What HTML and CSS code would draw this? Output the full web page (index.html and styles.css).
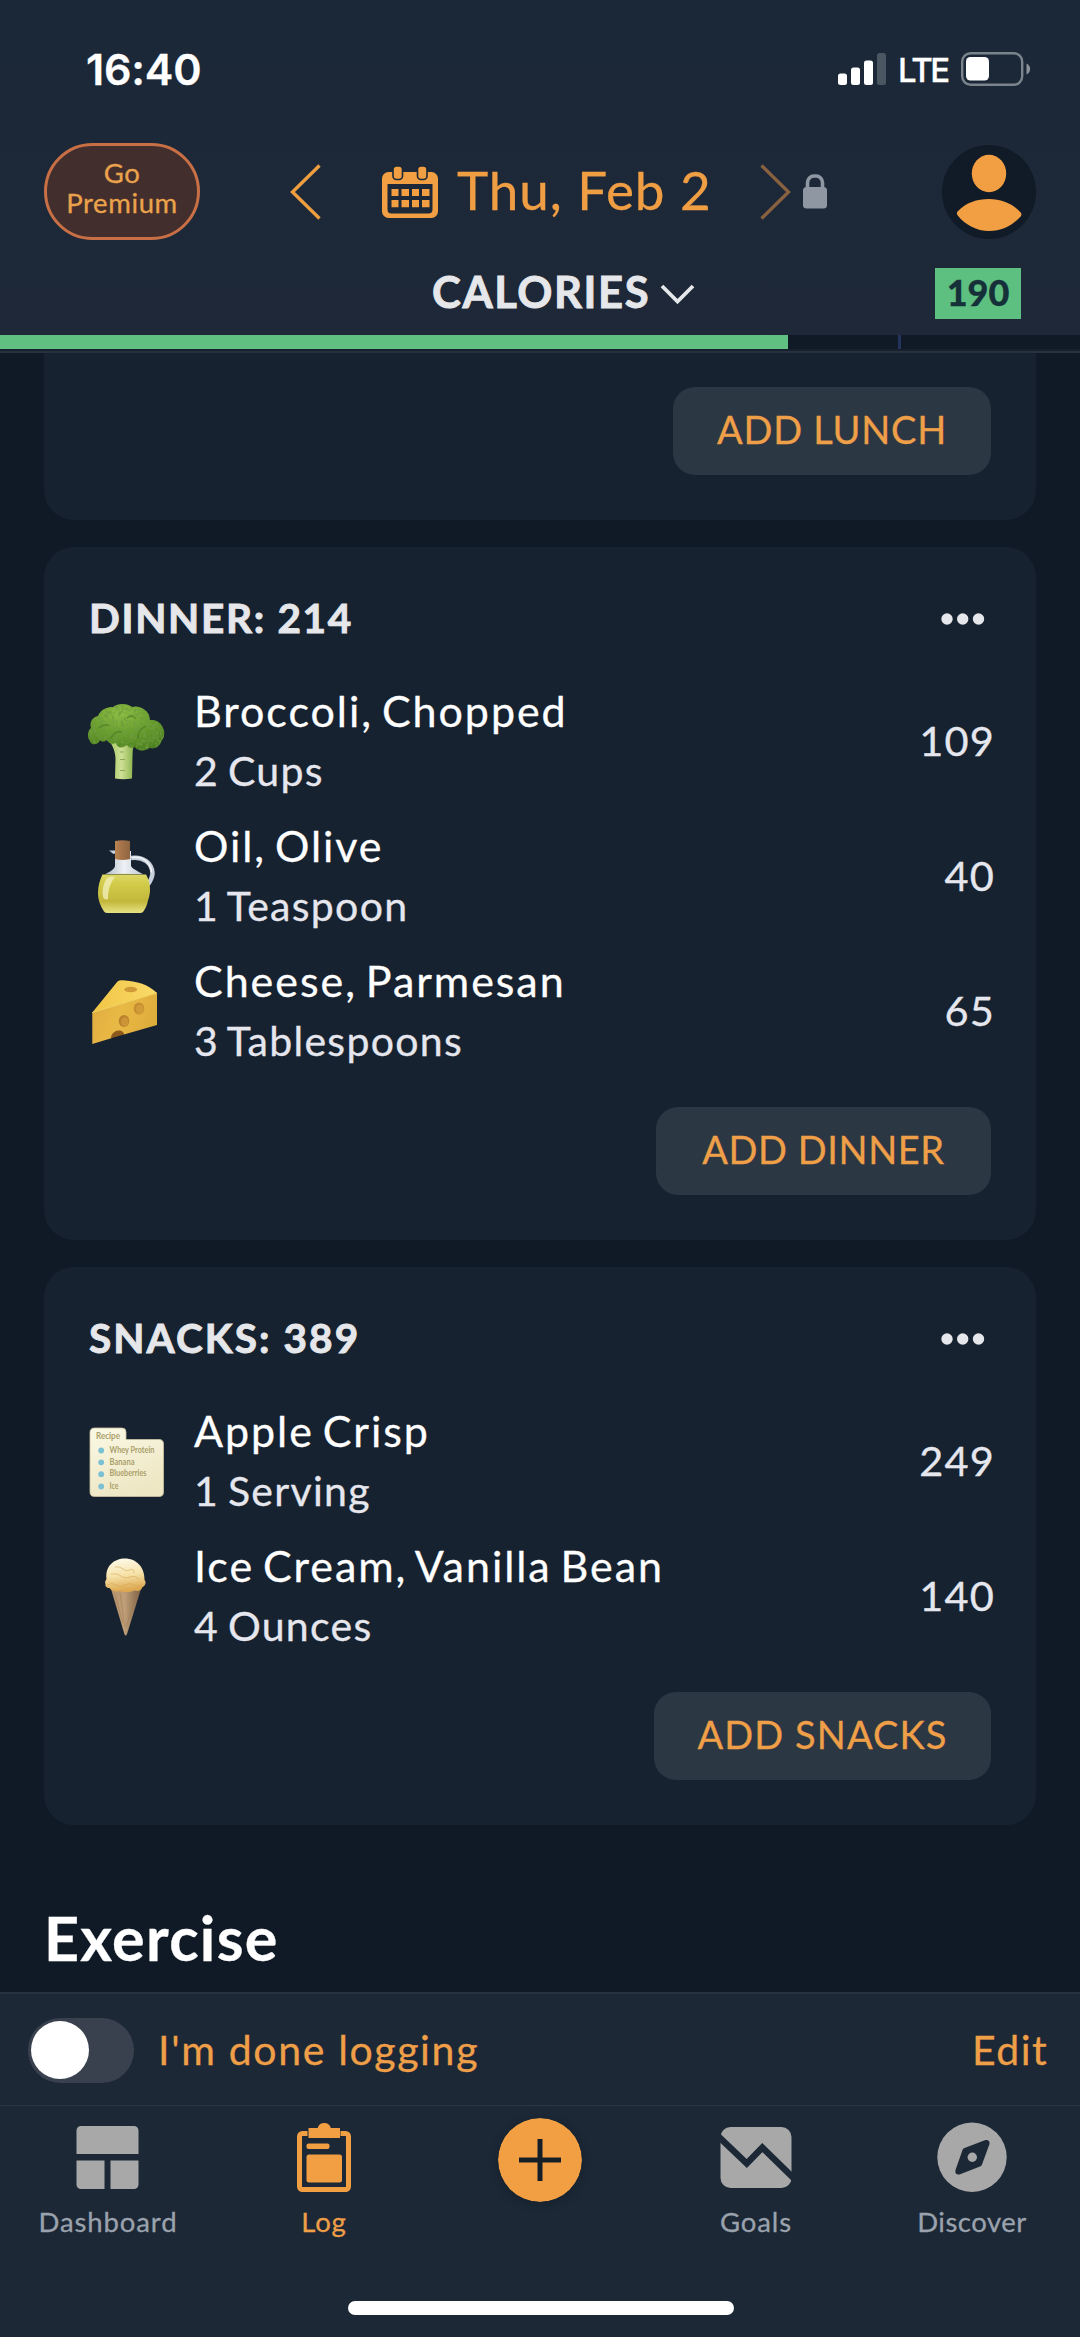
FILE: index.html
```html
<!DOCTYPE html>
<html lang="en">
<head>
<meta charset="utf-8">
<title>Log – Thu, Feb 2</title>
<link rel="stylesheet" href="styles.css">
</head>
<body>
<header class="top">
  <div class="status">
    <span class="time">16:40</span>
    <svg class="signal" width="49" height="32" viewBox="0 0 49 32"><g fill="#fff"><rect x="0" y="20.500" width="9" height="11.500" rx="2.500"/><rect x="13" y="14.500" width="9" height="17.500" rx="2.500"/><rect x="26" y="7.500" width="9" height="24.500" rx="2.500"/></g><rect x="39" y="0" width="9" height="32" rx="2.500" fill="#4a5662"/></svg>
    <span class="lte">LTE</span>
    <svg class="battery" width="71" height="34" viewBox="0 0 71 34"><rect x="1.200" y="1.200" width="60" height="31.600" rx="8.500" fill="none" stroke="#7b848d" stroke-width="2.400"/><rect x="5" y="5" width="23" height="23.500" rx="4.500" fill="#fff"/><path d="M65.500 11.500a6 6 0 0 1 0 11z" fill="#8b939b"/></svg>
  </div>
  <nav class="datebar">
    <button class="premium">Go<br>Premium</button>
    <svg class="prev" width="31" height="56" viewBox="0 0 31 56"><path d="M29.500 1.500 2.500 28l27 26.500" fill="none" stroke="#ee9d40" stroke-width="3.400"/></svg>
    <svg class="calendar" width="56" height="54" viewBox="0 0 56 54"><path fill="#f29e42" fill-rule="evenodd" d="M6.500 7h43a6.500 6.500 0 0 1 6.500 6.500v33a6.500 6.500 0 0 1-6.500 6.500h-43A6.500 6.500 0 0 1 0 46.500v-33A6.500 6.500 0 0 1 6.500 7zM5.500 19v25.500a4 4 0 0 0 4 4h37a4 4 0 0 0 4-4V19z"/><g fill="#f29e42" stroke="#1c2836" stroke-width="1.600"><rect x="11" y="1" width="9.500" height="13.500" rx="3.500"/><rect x="35.500" y="1" width="9.500" height="13.500" rx="3.500"/></g><g fill="#f29e42"><path d="M9.500 24h7v7h-7zM19.500 24h7.500v7h-7.500zM30 24h7v7h-7zM40 24h7.500v7H40zM9.500 35h7v7.200h-7zM19.500 35h7.500v7.200h-7.500zM30 35h7v7.200h-7zM40 35h7.500v7.200H40z"/></g></svg>
    <span class="date">Thu, Feb 2</span>
    <svg class="next" width="31" height="56" viewBox="0 0 31 56"><path d="M1.500 1.500 28.500 28l-27 26.500" fill="none" stroke="#876140" stroke-width="3.400"/></svg>
    <svg class="lock" width="24" height="35" viewBox="0 0 24 35"><rect y="13" width="24" height="21.500" rx="3.500" fill="#8f97a2"/><path d="M4.500 15V8.500a6.500 6.500 0 0 1 6.500-6.500h2a6.500 6.500 0 0 1 6.500 6.500V15" fill="none" stroke="#8f97a2" stroke-width="3.600"/></svg>
    <svg class="avatar" width="94" height="94" viewBox="0 0 94 94"><circle cx="47" cy="47" r="47" fill="#111a27"/><ellipse cx="47" cy="28.500" rx="17.200" ry="18.700" fill="#f29e42"/><path d="M15.500 66.500C24 57.500 35 54 47 54s24 4.500 31.700 13.500c1 1.500 1 2.500 0 4C70.500 80.500 59.500 86 47 86s-23.500-6-31.300-15.500c-1-1.500-1.200-2.500-.2-4z" fill="#f29e42"/></svg>
  </nav>
  <div class="metric">
    <span class="metric-name">CALORIES</span>
    <svg class="down" width="35" height="20" viewBox="0 0 35 20"><path d="M2 2l15.500 15.500L33 2" fill="none" stroke="#e6e7ea" stroke-width="3.800"/></svg>
    <span class="badge">190</span>
  </div>
  <div class="progress"><i class="fill"></i><i class="tick"></i></div>
</header>

<main class="log">
  <section class="card clipped">
    <button class="add lunch">ADD LUNCH</button>
  </section>

  <section class="card">
    <div class="meal"><h2 class="dinner-title">DINNER: 214</h2><svg class="more" width="44" height="12" viewBox="0 0 44 12"><g fill="#e6e7ea"><circle cx="6" cy="6" r="5.700"/><circle cx="21.700" cy="6" r="5.700"/><circle cx="37.500" cy="6" r="5.700"/></g></svg></div>
    <div class="food">
      <svg class="pic" width="80" height="80" viewBox="0 0 80 80">
        <defs>
          <linearGradient id="stem"><stop offset="0" stop-color="#9cc35a"/><stop offset=".5" stop-color="#cfe095"/><stop offset="1" stop-color="#86b048"/></linearGradient>
          <radialGradient id="crown" cx=".42" cy=".2" r=".85"><stop offset="0" stop-color="#8fbf45"/><stop offset=".5" stop-color="#6a9f2f"/><stop offset="1" stop-color="#4b7f20"/></radialGradient>
          <filter id="florets" x="0" y="0" width="1" height="1"><feTurbulence type="fractalNoise" baseFrequency=".32" numOctaves="2" seed="4" result="noise"/><feColorMatrix in="noise" type="matrix" values="0 0 0 0 .16  0 0 0 0 .33  0 0 0 0 .05  2.600 0 0 0 -1.050" result="dark"/><feComposite in="dark" in2="SourceGraphic" operator="in" result="specks"/><feMerge><feMergeNode in="SourceGraphic"/><feMergeNode in="specks"/></feMerge></filter>
        </defs>
        <path d="M21 37c5 7 7.500 13 7.500 20l-.5 19.500q8.500 1.500 17 0L45.500 55c0-7 1-12 2-18z" fill="url(#stem)"/>
        <path d="M33 50h4M33 57.500h5M33 68.500h5" stroke="#8fa55a" stroke-width="1"/>
        <path d="M4 41C0 36 0 29 4 26c-2-6 2-11 7-12C14 7 20 5 26 5c5-4 14-4 19 0 7-2 14 2 17 8l1 5c8-1 13 5 14 11 1 4-1 8-3 11-2 6-8 7-12 6-5 4-12 3-14-1-3 2-6 1-8-2-5 4-10 3-11-2-4 2-8 0-9-3-3 2-6 2-7 0-2 5-7 5-9 3z" fill="url(#crown)" filter="url(#florets)"/>
        <path d="M12 26q5-5 10-2m2 12q4-8 11-6m5-14q5-4 9 1m2 20q-1-9 8-13" fill="none" stroke="#35661a" stroke-width="1.600" opacity=".4"/>
      </svg>
      <div class="label"><p class="name">Broccoli, Chopped</p><p class="amount">2 Cups</p></div>
      <span class="kcal">109</span>
    </div>
    <div class="food">
      <svg class="pic" width="80" height="80" viewBox="0 0 80 80">
        <defs>
          <linearGradient id="cork"><stop offset="0" stop-color="#b98450"/><stop offset=".4" stop-color="#a8744a"/><stop offset="1" stop-color="#8f6540"/></linearGradient>
          <linearGradient id="oil" x1="0" x2="0" y1="0" y2="1"><stop offset="0" stop-color="#ded96c"/><stop offset=".25" stop-color="#d2cc4a"/><stop offset=".7" stop-color="#c2b73a"/><stop offset="1" stop-color="#e7e384"/></linearGradient>
          <linearGradient id="glass"><stop offset="0" stop-color="#aab4c2"/><stop offset=".5" stop-color="#eef1f5"/><stop offset="1" stop-color="#bcc5d0"/></linearGradient>
        </defs>
        <path d="M44 21c12-2 21 5 21.500 15 0 5-2 8-5 12" fill="none" stroke="#c8d0db" stroke-width="4.500"/><path d="M45 20.500c11-1.500 19 5 19.500 15" fill="none" stroke="#f3f5f8" stroke-width="1.500"/>
        <path d="M22 13.500h6V29c-1 5-8 6-12 10h42c-4-4-12-6-14-10V14h-1.500v8h-13v-6.500l-3 1.500z" fill="url(#glass)"/>
        <path d="M28 4q7.500-1.500 15 0v18q-7.500 2-15 0z" fill="url(#cork)"/>
        <path d="M15.500 37.500Q37 36 59 37.500c5 9 5 18 2 26-1 5-3 9-5 11.500q-1 1-3 1H21q-3 0-4-1.500c-4-6-6-12-6-18 0-8 2-14 4.500-19z" fill="url(#oil)"/><path d="M15.500 37.500h43.500" stroke="#79783b" stroke-width=".8"/>
        <path d="M20 41q4-2 8-1c-5 6-7 14-7 22-2 1-4 0-5-2-1-7 0-13 4-19z" fill="#f3f1c0" opacity=".75"/>
      </svg>
      <div class="label"><p class="name">Oil, Olive</p><p class="amount">1 Teaspoon</p></div>
      <span class="kcal">40</span>
    </div>
    <div class="food">
      <svg class="pic" width="80" height="80" viewBox="0 0 80 80">
        <defs>
          <linearGradient id="rind" x1="0" x2="1"><stop offset="0" stop-color="#f0c443"/><stop offset="1" stop-color="#fadb6a"/></linearGradient>
          <linearGradient id="side" x1="0" x2="1" y2=".3"><stop offset="0" stop-color="#dfaa3f"/><stop offset=".5" stop-color="#e9b945"/><stop offset="1" stop-color="#dfad3c"/></linearGradient>
        </defs>
        <path d="M5.300 40.500 30.500 9.500q2-1.500 5-1.200C50 9 62 13 70 21z" fill="url(#rind)"/>
        <path d="M5.300 40.500 70 21v32L37 62.500c-1-2.500-3-3.500-5.500-3-3.500.5-6 3-6.500 6.500L5.300 72z" fill="url(#side)"/>
        <path d="M5.300 40.500 70 21" stroke="#f8d766" stroke-width="1"/>
        <path d="M24 66.300c0-4 3-7.300 7.500-7.800 3-.5 5.500 1.500 5.500 4z" fill="#8c5a1d"/>
        <ellipse cx="43.700" cy="17.500" rx="6.400" ry="2.800" fill="#d19a38"/><ellipse cx="52" cy="36.500" rx="5.300" ry="6" fill="#c78e31"/><ellipse cx="52.800" cy="37.300" rx="3.800" ry="4.600" fill="#d29b3a"/><ellipse cx="37" cy="49" rx="5.300" ry="6" fill="#bb822d"/><ellipse cx="37.800" cy="49.800" rx="3.800" ry="4.600" fill="#cd9438"/>
      </svg>
      <div class="label"><p class="name">Cheese, Parmesan</p><p class="amount">3 Tablespoons</p></div>
      <span class="kcal">65</span>
    </div>
    <button class="add">ADD DINNER</button>
  </section>

  <section class="card">
    <div class="meal"><h2 class="snacks-title">SNACKS: 389</h2><svg class="more" width="44" height="12" viewBox="0 0 44 12"><g fill="#e6e7ea"><circle cx="6" cy="6" r="5.700"/><circle cx="21.700" cy="6" r="5.700"/><circle cx="37.500" cy="6" r="5.700"/></g></svg></div>
    <div class="food">
      <svg class="pic" width="80" height="80" viewBox="0 0 80 80">
        <defs><linearGradient id="paper" x1="0" x2=".4" y1="0" y2="1"><stop offset="0" stop-color="#fbf9e6"/><stop offset="1" stop-color="#eee7c4"/></linearGradient></defs>
        <path d="M7.500 6H35q4 0 4 4v7.500h33q4.500 0 4.500 4.500v48q0 4.500-4.500 4.500H7.500Q3 74.500 3 70V10.500Q3 6 7.500 6z" fill="url(#paper)" stroke="#c9c3a0" stroke-width=".8"/>
        <g fill="#7cc0d3"><circle cx="14.200" cy="28.500" r="2.900"/><circle cx="14.200" cy="40.300" r="2.900"/><circle cx="14.200" cy="52.200" r="2.900"/><circle cx="14.200" cy="64.500" r="2.900"/></g>
        <g class="card-text"><text class="card-title" x="9" y="16.500" textLength="24" lengthAdjust="spacingAndGlyphs">Recipe</text><text x="22.500" y="31" textLength="45" lengthAdjust="spacingAndGlyphs">Whey Protein</text><text x="22.500" y="42.500" textLength="25" lengthAdjust="spacingAndGlyphs">Banana</text><text x="22.500" y="54.200" textLength="37" lengthAdjust="spacingAndGlyphs">Blueberries</text><text x="22.500" y="66.500" textLength="9" lengthAdjust="spacingAndGlyphs">Ice</text></g>
      </svg>
      <div class="label"><p class="name">Apple Crisp</p><p class="amount">1 Serving</p></div>
      <span class="kcal">249</span>
    </div>
    <div class="food">
      <svg class="pic" width="80" height="80" viewBox="0 0 80 80">
        <defs>
          <linearGradient id="cone"><stop offset="0" stop-color="#b3916c"/><stop offset=".45" stop-color="#bf9e78"/><stop offset="1" stop-color="#7c6145"/></linearGradient>
          <linearGradient id="scoop" x1="0" x2=".15" y1="0" y2="1"><stop offset="0" stop-color="#fffdf0"/><stop offset=".55" stop-color="#f6e2a8"/><stop offset="1" stop-color="#dda851"/></linearGradient>
        </defs>
        <path d="M24 32h30L40 77q-1.300 3-2.600 0z" fill="url(#cone)"/>
        <path d="M28 38l8 28M33 36l5 34M50 36 39 70" stroke="#94724c" stroke-width=".8" opacity=".5" fill="none"/>
        <path d="M18.500 27c-1-2 0-3 1-5C18 9 27 1.500 38 1.500S58 10 57.500 23c2 2 1 6-2 7-1 4-5 4.500-8 3.500-5 2-11 2-15 .5-4 1.500-8 0-10-3-3 0-4.500-2-4-4z" fill="url(#scoop)"/>
        <path d="M28 10q5-1 8 2t7 1 4 3M24 17q7-1 10 2t9 1 9 3M20 28q5-3 9 0t9 0 9 0 9-1" fill="none" stroke="#d3a450" stroke-width="1" opacity=".55"/>
      </svg>
      <div class="label"><p class="name">Ice Cream, Vanilla Bean</p><p class="amount">4 Ounces</p></div>
      <span class="kcal">140</span>
    </div>
    <button class="add snacks">ADD SNACKS</button>
  </section>

  <h1 class="exercise">Exercise</h1>
</main>

<div class="done">
  <span class="toggle"><i class="knob"></i></span>
  <span class="done-text">I'm done logging</span>
  <span class="edit">Edit</span>
</div>

<footer class="foot">
  <nav class="tabs">
    <div class="tab"><svg class="glyph" width="72" height="84" viewBox="0 0 72 84"><g fill="#a8a8a8"><path d="M9 8h53a4.500 4.500 0 0 1 4.500 4.500V36h-62V12.500A4.500 4.500 0 0 1 9 8z"/><path d="M4.500 42.500h28V71H9a4.500 4.500 0 0 1-4.500-4.500z"/><path d="M38.500 42.500h28v24A4.500 4.500 0 0 1 62 71H38.500z"/></g></svg><span>Dashboard</span></div>
    <div class="tab active"><svg class="glyph" width="72" height="84" viewBox="0 0 72 84"><rect x="11.500" y="15.500" width="49" height="56" rx="3" fill="none" stroke="#f29e42" stroke-width="5"/><path d="M19.500 12h1.500v9h-1.500zM51 12h1.500v9H51z" fill="#1c2836"/><path d="M20.500 10h9.200a6.800 6.800 0 0 1 13.100 0H52v10H20.500z" fill="#f29e42"/><rect x="18.500" y="25.500" width="23" height="5.500" rx="2" fill="#f29e42"/><rect x="18.500" y="36.500" width="35.500" height="28" rx="2.500" fill="#f29e42"/></svg><span>Log</span></div>
    <div class="tab"><svg class="plus" width="84" height="84" viewBox="0 0 84 84"><circle cx="42" cy="42" r="42" fill="#f29e42"/><path d="M21 42h42M42 21v42" stroke="#161e28" stroke-width="5"/></svg></div>
    <div class="tab"><svg class="glyph" width="72" height="84" viewBox="0 0 72 84"><rect x=".5" y="9" width="71" height="61" rx="10" fill="#a8a8a8"/><path d="M-2 18 26.800 45.500 42.300 29.500 75 61.500" fill="none" stroke="#1c2836" stroke-width="6.500"/></svg><span>Goals</span></div>
    <div class="tab"><svg class="glyph" width="72" height="84" viewBox="0 0 72 84"><circle cx="36" cy="39.300" r="34.700" fill="#a8a8a8"/><path d="M28.500 30 49.500 22q4.500-.5 4 4L46 46.500q-.5 1.500-2 2L23.500 56.500q-5 .5-4-4.500L26.500 32q.5-1.500 2-2z" fill="#1c2836"/><circle cx="36.300" cy="39.300" r="4.700" fill="#a8a8a8"/></svg><span class="discover">Discover</span></div>
  </nav>
  <div class="home"></div>
</footer>
</body>
</html>
```
FILE: styles.css
```css
* { box-sizing: border-box; margin: 0; padding: 0; }
body { width: 1080px; height: 2337px; display: flex; flex-direction: column; overflow: hidden; background: #101926; color: #fff; font-family: Lato, "Open Sans", sans-serif; -webkit-text-stroke: .3px; }
svg { display: block; flex: none; }
button { border: 0; font-family: inherit; }

.top { flex: none; height: 353px; background: linear-gradient(#1b2837, #1e2838); border-bottom: 2px solid #28323f; }
.status { height: 143px; padding: 0 50px 6px 86px; display: flex; align-items: center; }
.time { font: 600 43px Inter, sans-serif; letter-spacing: -.2px; }
.signal { margin-left: auto; }
.lte { width: 50px; margin-left: 11px; padding-top: 3px; font: 500 33px Inter, sans-serif; letter-spacing: -2.4px; }
.battery { margin-left: 13px; margin-right: -2px; }

.datebar { height: 97px; padding: 0 44px; display: flex; align-items: center; color: #f09e44; }
.premium { width: 156px; height: 97px; padding-bottom: 8px; border: 3px solid #c96f45; border-radius: 49px; background: #422f2d; color: #eba24c; font-size: 27.500px; line-height: 29.500px; letter-spacing: .6px; }
.prev { margin-left: 90px; }
.calendar { margin-left: 61px; }
.date { width: 322px; padding: 0 0 4px 19px; font-size: 53px; letter-spacing: .95px; white-space: nowrap; }
.lock { margin-left: 12px; }
.avatar { margin-left: auto; }

.metric { height: 95px; padding: 9px 59px 0 432px; display: flex; align-items: center; color: #e6e7ea; }
.metric-name { width: 228px; padding-bottom: 2px; font-weight: 700; font-size: 43.500px; letter-spacing: 1.600px; -webkit-text-stroke: .9px; }
.down { margin-top: 3px; }
.badge { width: 86px; height: 51px; margin-left: auto; margin-bottom: -3px; padding-bottom: 3px; display: grid; place-items: center; background: #5dbf80; color: #16303a; font-weight: 900; font-size: 36px; }
.progress { height: 14px; display: flex; background: #101926; box-shadow: 0 2px #17212d; }
.fill { width: 788px; background: #5fc081; }
.tick { width: 3px; margin-left: 110px; background: #22345b; }

.log { flex: 1; min-height: 0; overflow: hidden; padding: 0 44px; }
.card { margin-bottom: 27px; padding: 0 45px 45px; border-radius: 30px; background: #172230; display: flex; flex-direction: column; }
.clipped { padding-top: 34px; border-radius: 0 0 30px 30px; }
.add { align-self: flex-end; width: 335px; height: 88px; margin-top: 28px; padding-bottom: 5px; border-radius: 22px; background: #2c3744; color: #ee9f48; font-size: 38px; letter-spacing: .6px; -webkit-text-stroke: .3px; }
.lunch { width: 318px; margin-top: 0; letter-spacing: .75px; }
.snacks { width: 337px; letter-spacing: 1.100px; }
.meal { height: 127px; padding: 13px 6px 0 0; display: flex; align-items: center; justify-content: space-between; color: #e6e7ea; }
.meal h2 { font-size: 40.500px; font-weight: 700; letter-spacing: 1.700px; -webkit-text-stroke: .9px; }
.meal .snacks-title { letter-spacing: 2.100px; }
.more { margin-top: 3px; }
.food { height: 135px; display: flex; align-items: center; }
.pic { margin: 0 27px 0 -2px; -webkit-text-stroke: 0; }
.label { flex: 1; padding-bottom: 2px; white-space: nowrap; }
.name { font-size: 43px; line-height: 60px; letter-spacing: 1.950px; word-spacing: -4px; }
.amount { font-size: 41px; line-height: 60px; letter-spacing: 1.300px; word-spacing: -3px; color: #e6e7ee; }
.kcal { font-size: 41.500px; letter-spacing: 1.200px; margin-right: -4px; padding-bottom: 4px; color: #e6e7ee; }
.card-text { font-size: 8.500px; font-weight: 700; fill: #aaa06b; }
.card-title { font-size: 9px; }
.exercise { margin-top: 77px; font-size: 61px; font-weight: 700; line-height: 72px; letter-spacing: 1.300px; }

.done { flex: none; height: 113px; padding: 0 32px 0 28px; display: flex; align-items: center; background: #1c2836; border-top: 2px solid #263240; color: #ee9f48; font-size: 41px; }
.toggle { width: 106px; height: 65px; margin-top: 1px; padding: 3px; border-radius: 33px; background: #3a414e; }
.knob { display: block; width: 58px; height: 58px; border-radius: 50%; background: #fff; }
.done-text { margin-left: 24px; letter-spacing: 1.650px; }
.edit { margin-left: auto; letter-spacing: 1.400px; }

.foot { flex: none; height: 232px; background: #1c2836; border-top: 1px solid #2b3643; }
.tabs { height: 195px; padding-top: 12px; display: grid; grid-template-columns: repeat(5, 216px); justify-items: center; }
.tab { display: flex; flex-direction: column; align-items: center; color: #9aa2ad; font-size: 27.500px; line-height: 34px; letter-spacing: .9px; }
.tab span { margin-top: 3px; }
.tab .discover { letter-spacing: .5px; }
.active { color: #ee9f48; }
.glyph { overflow: hidden; }
.plus { border-radius: 50%; box-shadow: 0 2px 12px #0003; }
.home { width: 386px; height: 14px; margin-left: 348px; border-radius: 7px; background: #fff; }
```
